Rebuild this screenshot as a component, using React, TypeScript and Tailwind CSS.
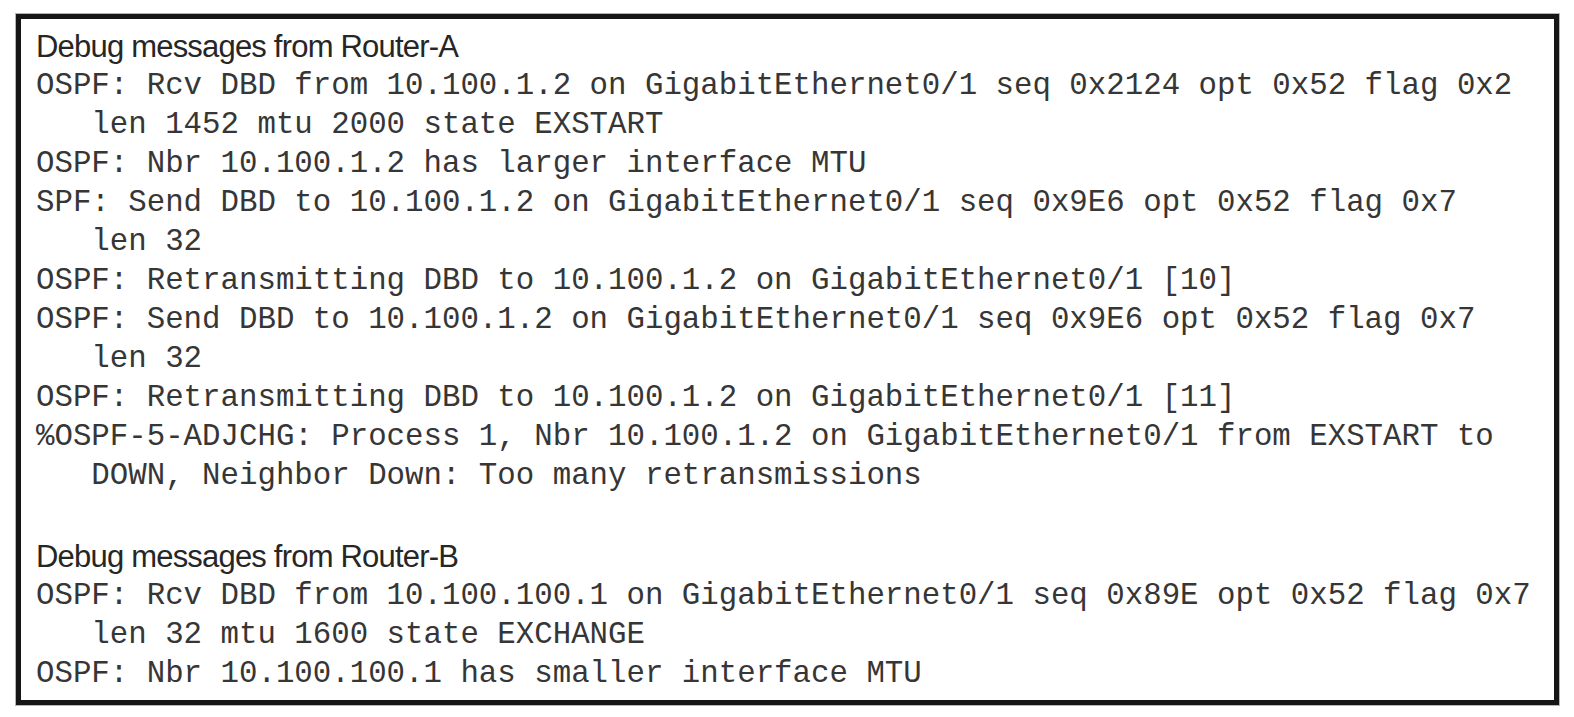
const routerA = [
  'OSPF: Rcv DBD from 10.100.1.2 on GigabitEthernet0/1 seq 0x2124 opt 0x52 flag 0x2',
  '   len 1452 mtu 2000 state EXSTART',
  'OSPF: Nbr 10.100.1.2 has larger interface MTU',
  'SPF: Send DBD to 10.100.1.2 on GigabitEthernet0/1 seq 0x9E6 opt 0x52 flag 0x7',
  '   len 32',
  'OSPF: Retransmitting DBD to 10.100.1.2 on GigabitEthernet0/1 [10]',
  'OSPF: Send DBD to 10.100.1.2 on GigabitEthernet0/1 seq 0x9E6 opt 0x52 flag 0x7',
  '   len 32',
  'OSPF: Retransmitting DBD to 10.100.1.2 on GigabitEthernet0/1 [11]',
  '%OSPF-5-ADJCHG: Process 1, Nbr 10.100.1.2 on GigabitEthernet0/1 from EXSTART to',
  '   DOWN, Neighbor Down: Too many retransmissions',
];

const routerB = [
  'OSPF: Rcv DBD from 10.100.100.1 on GigabitEthernet0/1 seq 0x89E opt 0x52 flag 0x7',
  '   len 32 mtu 1600 state EXCHANGE',
  'OSPF: Nbr 10.100.100.1 has smaller interface MTU',
];

function Heading({ children }: { children: string }) {
  return (
    <div className="h-[39px] leading-[39px] text-[31px] tracking-[-0.8px] text-[#262626] font-['Liberation_Sans',Arial,sans-serif] whitespace-pre">
      {children}
    </div>
  );
}

function Line({ text }: { text: string }) {
  return (
    <div className="h-[39px] leading-[39px] text-[30.75px] text-[#363636] font-['Liberation_Mono','Courier_New',monospace] whitespace-pre">
      {text}
    </div>
  );
}

export default function App() {
  return (
    <div className="min-h-screen bg-white pt-[14px] pl-[16px]">
      <div className="w-[1543px] h-[691px] border-[5px] border-[#161616] pt-[8px] pl-[15px] shadow-[0_0_0_1px_#b5b5b5]">
        <Heading>Debug messages from Router-A</Heading>
        {routerA.map((l, i) => (
          <Line key={i} text={l} />
        ))}
        <div className="h-[42px]" />
        <Heading>Debug messages from Router-B</Heading>
        {routerB.map((l, i) => (
          <Line key={i} text={l} />
        ))}
      </div>
    </div>
  );
}
